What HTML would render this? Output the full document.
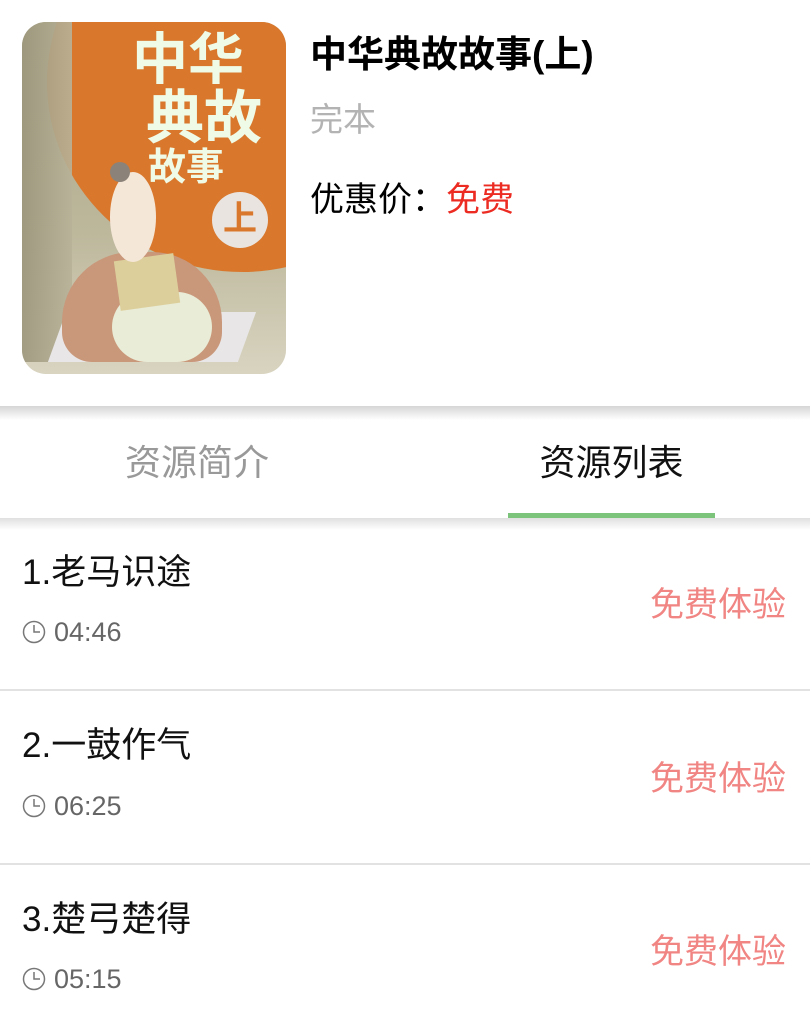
<!DOCTYPE html>
<html><head><meta charset="utf-8"><style>
body{margin:0;width:810px;height:1024px;overflow:hidden;background:#fff;font-family:"Liberation Sans","Noto Sans CJK SC",sans-serif;position:relative}
.a{position:absolute;white-space:nowrap}
.cover{position:absolute;left:22px;top:22px;width:264px;height:352px;border-radius:24px;overflow:hidden;background:linear-gradient(#a9a487,#bdb89c 60%,#d8d4c0)}
.t{font-size:35px;color:#111}
.sep{position:absolute;left:0;width:810px;height:2px;background:#e2e2e2}
.d{font-size:27px;color:#666;line-height:30px}
.d svg{vertical-align:-3px;margin-right:8px}
.f{font-size:34px;color:#f08583;line-height:46px;left:650px}
</style></head><body>
<div class="cover">
 <div style="position:absolute;left:25px;top:-130px;width:390px;height:380px;border-radius:50%;background:#d9782d"></div>
 <div style="position:absolute;left:0;top:0;width:50px;height:340px;background:linear-gradient(90deg,#9c977c,#b8b298);opacity:.9"></div>
 <div class="a" style="left:110px;top:8px;font-size:56px;font-weight:bold;color:#effbe6;line-height:60px">中华</div>
 <div class="a" style="left:124px;top:66px;font-size:58px;font-weight:bold;color:#effbe6;line-height:62px">典故</div>
 <div class="a" style="left:126px;top:126px;font-size:38px;font-weight:bold;color:#effbe6;line-height:40px">故事</div>
 <div style="position:absolute;left:190px;top:170px;width:56px;height:56px;border-radius:50%;background:#e9e4e0;color:#d9782d;font-size:34px;font-weight:bold;text-align:center;line-height:54px">上</div>
 <div style="position:absolute;left:35px;top:290px;width:190px;height:50px;background:#e8e6e6;transform:skewX(-20deg)"></div>
 <div style="position:absolute;left:40px;top:230px;width:160px;height:110px;border-radius:70px 70px 30px 30px;background:#c9977a"></div>
 <div style="position:absolute;left:90px;top:270px;width:100px;height:70px;border-radius:40px;background:#e9ecd6"></div>
 <div style="position:absolute;left:95px;top:235px;width:60px;height:50px;background:#dccf9c;transform:rotate(-8deg)"></div>
 <div style="position:absolute;left:88px;top:150px;width:46px;height:90px;border-radius:50%;background:#f5e7d8"></div>
 <div style="position:absolute;left:88px;top:140px;width:20px;height:20px;border-radius:50%;background:#8b8279"></div>
</div>
<div class="a" style="left:310px;top:32px;font-size:37px;font-weight:bold;color:#000;line-height:46px">中华典故故事(上)</div>
<div class="a" style="left:310px;top:100px;font-size:33px;color:#b3b3b3;line-height:40px">完本</div>
<div class="a" style="left:310px;top:178px;font-size:34px;color:#000;line-height:44px">优惠价：<span style="color:#ec2b22">免费</span></div>
<div style="position:absolute;left:0;top:406px;width:810px;height:14px;background:linear-gradient(#d6d6d6,#fff)"></div>
<div class="a" style="left:0;top:440px;width:394px;text-align:center;font-size:36px;color:#999;line-height:46px">资源简介</div>
<div class="a" style="left:508px;top:440px;width:207px;text-align:center;font-size:36px;color:#111;line-height:46px">资源列表</div>
<div style="position:absolute;left:508px;top:513px;width:207px;height:5px;background:#7cc47c"></div>
<div style="position:absolute;left:0;top:518px;width:810px;height:12px;background:linear-gradient(#e0e0e0,#fff)"></div>

<div class="a t" style="left:22px;top:550px;line-height:46px">1.老马识途</div>
<div class="a d" style="left:22px;top:617px"><svg width="24" height="24" viewBox="0 0 24 24"><circle cx="12" cy="12" r="10.5" fill="none" stroke="#777" stroke-width="1.5"/><path d="M12 5v7h6" fill="none" stroke="#777" stroke-width="1.5"/></svg>04:46</div>
<div class="a f" style="top:582px">免费体验</div>
<div class="sep" style="top:689px"></div>
<div class="a t" style="left:22px;top:723px;line-height:46px">2.一鼓作气</div>
<div class="a d" style="left:22px;top:791px"><svg width="24" height="24" viewBox="0 0 24 24"><circle cx="12" cy="12" r="10.5" fill="none" stroke="#777" stroke-width="1.5"/><path d="M12 5v7h6" fill="none" stroke="#777" stroke-width="1.5"/></svg>06:25</div>
<div class="a f" style="top:756px">免费体验</div>
<div class="sep" style="top:863px"></div>
<div class="a t" style="left:22px;top:897px;line-height:46px">3.楚弓楚得</div>
<div class="a d" style="left:22px;top:964px"><svg width="24" height="24" viewBox="0 0 24 24"><circle cx="12" cy="12" r="10.5" fill="none" stroke="#777" stroke-width="1.5"/><path d="M12 5v7h6" fill="none" stroke="#777" stroke-width="1.5"/></svg>05:15</div>
<div class="a f" style="top:929px">免费体验</div>
</body></html>
